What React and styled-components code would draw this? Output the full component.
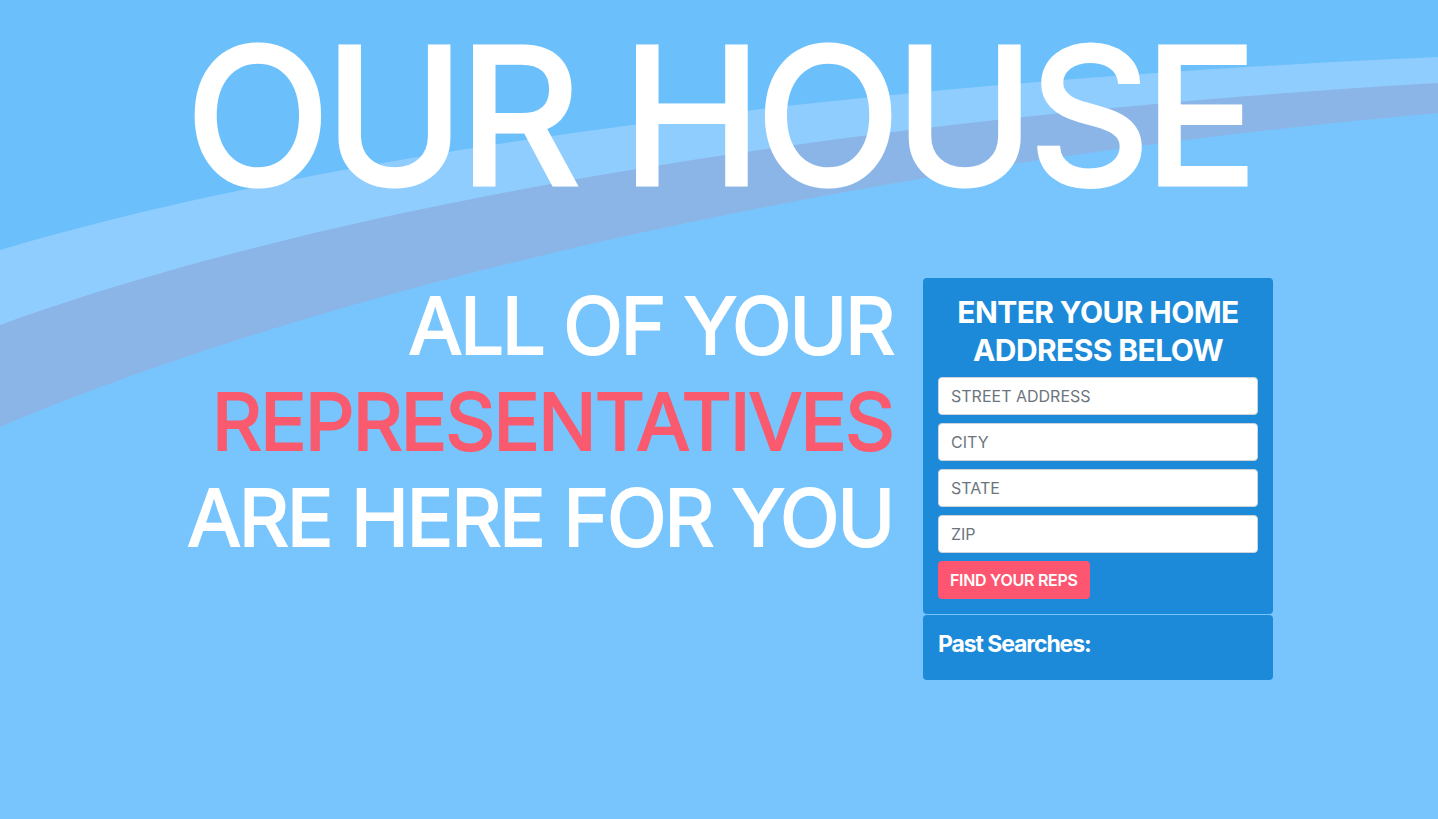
import React, { useState } from 'react';
import styled, { createGlobalStyle } from 'styled-components';

const GlobalStyle = createGlobalStyle`
  html, body {
    margin: 0;
    padding: 0;
  }
  body {
    font-family: Inter, "Liberation Sans", Arial, sans-serif;
    background: #78c5fe;
  }
  * {
    box-sizing: border-box;
  }
`;

const Page = styled.div`
  position: relative;
  min-height: 100vh;
  overflow: hidden;
  background: #78c5fe;
`;

const Waves = styled.svg`
  position: absolute;
  top: 0;
  left: 0;
  width: 100%;
  height: 819px;
  z-index: 0;
`;

const Content = styled.div`
  position: relative;
  z-index: 1;
`;

// medium weight: regular face thickened with a stroke
const Title = styled.h1`
  margin: 0;
  padding-top: 22px;
  text-align: center;
  color: white;
  font-size: 188px;
  font-weight: 400;
  line-height: 1;
  letter-spacing: -5.4px;
  -webkit-text-stroke: 5px white;
`;

const Container = styled.div`
  width: 1140px;
  margin: 68px auto 0;
  display: grid;
  grid-template-columns: 760px 380px;
  transform: translateX(-1px);
`;

const Column = styled.div`
  padding: 0 15px;
`;

const Tagline = styled.h2`
  margin: 0;
  text-align: right;
  color: white;
  font-size: 78px;
  font-weight: 400;
  line-height: 96px;
  letter-spacing: -2.3px;
  -webkit-text-stroke: 2px currentColor;
`;

const Highlight = styled.span`
  display: block;
  color: #fa5a6e;
  letter-spacing: -2.1px;
`;

const Card = styled.div`
  background: #1c8ad9;
  border-radius: 4px;
  padding: ${p => p.compact ? '15px 15px 22px' : '15px'};
  margin-bottom: 1px;
  color: white;
`;

const CardTitle = styled.h3`
  margin: 0 0 8px;
  text-align: center;
  font-size: 30px;
  font-weight: 700;
  line-height: 38px;
  letter-spacing: -0.6px;
`;

const Input = styled.input`
  display: block;
  width: 100%;
  height: 38px;
  margin-bottom: 8px;
  padding: 6px 12px;
  border: 1px solid #ced4da;
  border-radius: 4px;
  background: white;
  font-family: inherit;
  font-size: 16px;
  color: #495057;

  &::placeholder {
    color: #6c757d;
    opacity: 1;
  }
`;

const Button = styled.button`
  height: 38px;
  padding: 0 12px;
  border: none;
  border-radius: 4px;
  background: #fe5670;
  color: white;
  font-family: inherit;
  font-size: 16px;
  font-weight: 600;
  letter-spacing: -0.3px;
  cursor: pointer;
`;

const PastTitle = styled.h4`
  margin: 0;
  font-size: 23px;
  font-weight: 700;
  line-height: 28px;
  letter-spacing: -1.1px;
`;

function App() {
  const [address, setAddress] = useState({ street: '', city: '', state: '', zip: '' });

  const update = (field) => (e) => setAddress({ ...address, [field]: e.target.value });

  return (
    <Page>
      <GlobalStyle />
      <Waves viewBox="0 0 1438 819" preserveAspectRatio="none">
        <path d="M0 0 H1438 V113 C800 170, 300 300, 0 427 Z" fill="#8bb5e6" />
        <path d="M0 0 H1438 V83 C800 120, 300 215, 0 325 Z" fill="#8fcdff" />
        <path d="M0 0 H1438 V57 C800 85, 300 160, 0 250 Z" fill="#6bbffa" />
      </Waves>
      <Content>
        <Title>OUR HOUSE</Title>
        <Container>
          <Column>
            <Tagline>
              ALL OF YOUR
              <Highlight>REPRESENTATIVES</Highlight>
              ARE HERE FOR YOU
            </Tagline>
          </Column>
          <Column>
            <Card>
              <CardTitle>ENTER YOUR HOME ADDRESS BELOW</CardTitle>
              <Input placeholder="STREET ADDRESS" value={address.street} onChange={update('street')} />
              <Input placeholder="CITY" value={address.city} onChange={update('city')} />
              <Input placeholder="STATE" value={address.state} onChange={update('state')} />
              <Input placeholder="ZIP" value={address.zip} onChange={update('zip')} />
              <Button>FIND YOUR REPS</Button>
            </Card>
            <Card compact>
              <PastTitle>Past Searches:</PastTitle>
            </Card>
          </Column>
        </Container>
      </Content>
    </Page>
  );
}

export default App;
